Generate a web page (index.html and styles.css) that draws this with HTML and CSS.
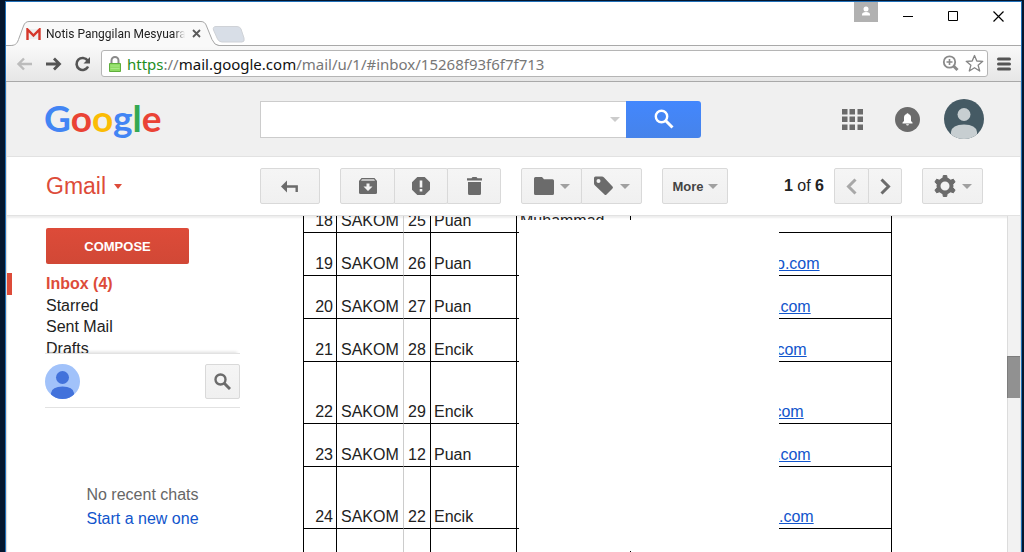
FILE: index.html
```html
<!DOCTYPE html>
<html lang="en">
<head>
<meta charset="utf-8">
<title>Notis Panggilan Mesyuarat - Gmail</title>
<link rel="stylesheet" href="styles.css">
</head>
<body>
<div class="window">
  <div class="titlebar">
    <div class="tab">
      <svg class="tab-shape" width="212" height="26" viewBox="0 0 212 26"><path d="M0 24.500C5 24.500 7 23 8.500 18.500L13.500 5Q15 .5 19 .5H191Q195 .5 196.500 5L202 18.500Q204.500 24.500 209 24.500V26H0Z" fill="#f9f9f9"/><path d="M0 24.500C5 24.500 7 23 8.500 18.500L13.500 5Q15 .5 19 .5H191Q195 .5 196.500 5L202 18.500Q204.500 24.500 209 24.500" fill="none" stroke="#a6a6a6"/></svg>
      <svg class="tab-icon" width="15" height="12" viewBox="0 0 15 12"><path d="M1 1h13v10H1z" fill="#eee"/><path d="M1.500 12V1.500L7.500 7.500 13.500 1.500V12" fill="none" stroke="#d5362a" stroke-width="2.400"/></svg>
      <span class="tab-title">Notis Panggilan Mesyuarat</span>
      <button class="plain tab-close" aria-label="Close tab"><svg width="9" height="9" viewBox="0 0 9 9"><path d="M1 1l7 7M8 1L1 8" stroke="#5a5a5a" stroke-width="1.800"/></svg></button>
    </div>
    <button class="plain new-tab" aria-label="New tab"><svg width="34" height="17" viewBox="0 0 34 17"><path d="M4 .5H25Q28 .5 29 3L32 12Q33 16 30 16H10Q7 16 5.500 13L1.500 4Q.5 .5 4 .5Z" fill="#d8dee7" stroke="#cfd2d7"/></svg></button>
    <div class="window-buttons">
      <span class="profile"><svg width="24" height="20" viewBox="0 0 24 20"><circle cx="12" cy="7" r="2.500" fill="#fff"/><path d="M8 13.500V12.500Q8 10 12 10T16 12.500V13.500Z" fill="#fff"/></svg></span>
      <button class="plain win" aria-label="Minimize"><svg width="11" height="11" viewBox="0 0 11 11"><path d="M0 5.500H10" stroke="#000"/></svg></button>
      <button class="plain win" aria-label="Maximize"><svg width="11" height="11" viewBox="0 0 11 11"><path d="M.5.5h9v9h-9z" fill="none" stroke="#000"/></svg></button>
      <button class="plain win" aria-label="Close"><svg width="11" height="11" viewBox="0 0 11 11"><path d="M.5.5l10 10M10.500.5l-10 10" stroke="#000" stroke-width="1.200"/></svg></button>
    </div>
  </div>

  <div class="browser-bar">
    <button class="plain" aria-label="Back"><svg width="17" height="14" viewBox="0 0 17 14"><path d="M16 7H3M8 1.500L2.500 7 8 12.500" fill="none" stroke="#bcbcbc" stroke-width="2.400"/></svg></button>
    <button class="plain" aria-label="Forward"><svg width="17" height="14" viewBox="0 0 17 14"><path d="M1 7H14M9 1.500L14.500 7 9 12.500" fill="none" stroke="#555" stroke-width="2.800"/></svg></button>
    <button class="plain" aria-label="Reload"><svg width="17" height="16" viewBox="0 0 17 16"><path d="M13.500 4.500A6 6 0 1 0 14 10.500" fill="none" stroke="#555" stroke-width="2.600"/><path d="M16 1V7.500H9.500Z" fill="#555"/></svg></button>
    <div class="omnibox">
      <svg width="12" height="16" viewBox="0 0 12 16"><path d="M2.500 8V4.500a3.500 3.500 0 0 1 7 0V8" fill="none" stroke="#8a8a8a" stroke-width="2"/><path d="M.5 7.500h11v8H.5z" fill="#8edb63" stroke="#5fae3d"/><path d="M1.500 10h9M1.500 12.500h9" stroke="#a9e886"/></svg>
      <div class="url" role="textbox" contenteditable="true" spellcheck="false" aria-label="Address"><span class="scheme">https</span>://<span class="host">mail.google.com</span>/mail/u/1/#inbox/15268f93f6f7f713</div>
      <button class="plain" aria-label="Zoom"><svg width="17" height="17" viewBox="0 0 17 17"><circle cx="7.500" cy="7" r="5.700" fill="none" stroke="#8a8a8a" stroke-width="1.800"/><path d="M4.500 7h6M7.500 4v6" stroke="#8a8a8a" stroke-width="1.600"/><path d="M11.500 11l4 4" stroke="#8a8a8a" stroke-width="3"/></svg></button>
      <button class="plain" aria-label="Bookmark"><svg width="19" height="19" viewBox="0 0 19 19"><path d="M9.500 1.500L11.800 7 17.800 7.300 13.100 11.200 14.700 17 9.500 13.700 4.300 17 5.900 11.200 1.200 7.300 7.200 7Z" fill="#fff" stroke="#858585" stroke-width="1.300" stroke-linejoin="round"/></svg></button>
    </div>
    <button class="plain" aria-label="Menu"><svg width="14" height="14" viewBox="0 0 14 14"><path d="M1.500 2H12.500M1.500 7H12.500M1.500 12H12.500" stroke="#555" stroke-width="3" stroke-linecap="round"/></svg></button>
  </div>

  <div class="page">
    <header class="google-bar">
      <a class="logo" href="#" aria-label="Google"><span class="b">G</span><span class="r">o</span><span class="y">o</span><span class="b">g</span><span class="g">l</span><span class="r">e</span></a>
      <form class="search">
        <input type="text" aria-label="Search mail">
        <button type="button" class="plain options" aria-label="Search options"><span class="caret light"></span></button>
        <button type="button" class="search-go" aria-label="Search"><svg width="20" height="20" viewBox="0 0 20 20"><circle cx="7.500" cy="7.500" r="5.700" fill="none" stroke="#fff" stroke-width="2.400"/><path d="M11.500 11.500L18.500 18.500" stroke="#fff" stroke-width="3"/></svg></button>
      </form>
      <div class="account">
        <button class="plain" aria-label="Apps"><svg width="21" height="21" viewBox="0 0 21 21" fill="#6b6b6b"><path d="M0 0h5.500v5.500H0zM7.500 0h5.500v5.500H7.500zM15.500 0H21v5.500h-5.500zM0 7.500h5.500V13H0zM7.500 7.500h5.500V13H7.500zM15.500 7.500H21V13h-5.500zM0 15.500h5.500V21H0zM7.500 15.500h5.500V21H7.500zM15.500 15.500H21V21h-5.500z"/></svg></button>
        <button class="plain" aria-label="Notifications"><svg width="25" height="25" viewBox="0 0 25 25"><circle cx="12.500" cy="12.500" r="12.500" fill="#6b6b6b"/><path d="M7.500 16.500V15.500L9 14V10.500Q9 7.500 11.700 7V6.300h1.600V7Q16 7.500 16 10.500V14L17.500 15.500V16.500ZM11 17.200h3Q13.700 18.500 12.500 18.500T11 17.200Z" fill="#fff"/></svg></button>
        <button class="plain" aria-label="Account"><svg width="40" height="40" viewBox="0 0 40 40"><clipPath id="face"><circle cx="20" cy="20" r="20"/></clipPath><g clip-path="url(#face)"><path d="M0 0h40v40H0z" fill="#455a64"/><circle cx="20" cy="15.500" r="6.500" fill="#c7ced1"/><path d="M7 40V33Q8 25.500 20 25.500T33 33V40Z" fill="#c7ced1"/></g></svg></button>
      </div>
    </header>

    <div class="mail-bar">
      <button class="plain gmail">Gmail <span class="caret red"></span></button>
      <button class="btn back" aria-label="Back to inbox"><svg width="18" height="13" viewBox="0 0 18 13"><path d="M0 6.500L6 .5V12.500Z" fill="#6b6b6b"/><path d="M5 6.500H15.700V12" fill="none" stroke="#6b6b6b" stroke-width="2.400"/></svg></button>
      <div class="group">
        <button class="btn archive" aria-label="Archive"><svg width="18" height="16" viewBox="0 0 18 16"><path d="M2.500 0h13L18 3V14.500Q18 16 16.500 16h-15Q0 16 0 14.500V3Z" fill="#6b6b6b"/><path d="M3 1.300h12l1 1.400H2Z" fill="#dcdcdc"/><path d="M7.500 5.500h3V8.500H13.500L9 13 4.500 8.500h3Z" fill="#f4f4f4"/></svg></button>
        <button class="btn" aria-label="Report spam"><svg width="18" height="18" viewBox="0 0 18 18"><path d="M5.300 0h7.400L18 5.300v7.400L12.700 18H5.300L0 12.700V5.300Z" fill="#6b6b6b"/><path d="M7.700 3.500h2.600V10.500H7.700zM7.700 12h2.600v2.500H7.700z" fill="#f4f4f4"/></svg></button>
        <button class="btn" aria-label="Delete"><svg width="15" height="18" viewBox="0 0 15 18"><path d="M0 1.300H4.500L5.500 0h4l1 1.300H15V3.500H0zM1 5h13V16.500Q14 18 12.500 18h-10Q1 18 1 16.500Z" fill="#6b6b6b"/></svg></button>
      </div>
      <div class="group">
        <button class="btn wide" aria-label="Move to"><svg width="20" height="18" viewBox="0 0 20 18"><path d="M0 1.500Q0 0 1.500 0H8L10 2.300H18.500Q20 2.300 20 3.800V16.500Q20 18 18.500 18h-17Q0 18 0 16.500Z" fill="#6b6b6b"/></svg><span class="caret"></span></button>
        <button class="btn wide" aria-label="Labels"><svg width="20" height="20" viewBox="0 0 20 20"><path d="M0 2Q0 .5 1.500.5H8Q9 .5 10 1.500L18.500 10.500Q19.500 11.500 18.500 12.500L12.500 18.500Q11.500 19.500 10.500 18.500L1 9.500Q0 8.500 0 7.500Z" fill="#6b6b6b"/><circle cx="4.500" cy="5" r="2" fill="#f4f4f4"/></svg><span class="caret"></span></button>
      </div>
      <button class="btn more">More<span class="caret"></span></button>
      <div class="count"><b>1</b> of <b>6</b></div>
      <div class="group pager">
        <button class="btn" aria-label="Newer"><svg width="11" height="17" viewBox="0 0 11 17"><path d="M9.500 1.500L2.500 8.500 9.500 15.500" fill="none" stroke="#a8a8a8" stroke-width="3"/></svg></button>
        <button class="btn" aria-label="Older"><svg width="11" height="17" viewBox="0 0 11 17"><path d="M1.500 1.500L8.500 8.500 1.500 15.500" fill="none" stroke="#6b6b6b" stroke-width="3"/></svg></button>
      </div>
      <button class="btn wide settings" aria-label="Settings"><svg width="22" height="22" viewBox="0 0 22 22"><circle cx="11" cy="11" r="6.500" fill="none" stroke="#6b6b6b" stroke-width="4"/><path d="M8.800 3.500L9.300.5H12.700L13.200 3.500ZM8.800 18.500L9.300 21.500H12.700L13.200 18.500ZM3.200 9.100L.9 7.100 2.600 4.200 5.500 5.300ZM16.500 5.300L19.400 4.200 21.100 7.100 18.800 9.100ZM3.200 12.900L.9 14.900 2.600 17.800 5.500 16.700ZM16.500 16.700L19.400 17.800 21.100 14.900 18.800 12.900Z" fill="#6b6b6b" stroke="#6b6b6b" stroke-linejoin="round"/></svg><span class="caret"></span></button>
    </div>

    <div class="body">
      <aside class="sidebar">
        <button class="compose">COMPOSE</button>
        <ul class="folders">
          <li class="current"><a href="#">Inbox (4)</a></li>
          <li><a href="#">Starred</a></li>
          <li><a href="#">Sent Mail</a></li>
          <li><a href="#">Drafts</a></li>
        </ul>
        <section class="chat">
          <div class="chat-head">
            <svg width="35" height="35" viewBox="0 0 35 35"><clipPath id="me"><circle cx="17.500" cy="17.500" r="17.500"/></clipPath><g clip-path="url(#me)"><path d="M0 0h35v35H0z" fill="#a1c2fa"/><circle cx="17.500" cy="13.500" r="6.500" fill="#4272db"/><path d="M6 35V29Q7 22.500 17.500 22.500T29 29V35Z" fill="#4272db"/></g></svg>
            <button class="btn find" aria-label="Search people"><svg width="17" height="17" viewBox="0 0 17 17"><circle cx="6.500" cy="6.500" r="5" fill="none" stroke="#6b6b6b" stroke-width="2.400"/><path d="M10 10L16 16" stroke="#6b6b6b" stroke-width="3"/></svg></button>
          </div>
          <p class="chat-empty">No recent chats<br><a href="#">Start a new one</a></p>
        </section>
      </aside>

      <main class="message">
        <table>
          <colgroup><col class="c-no"><col class="c-org"><col class="c-id"><col class="c-title"><col class="c-name"><col class="c-mail"></colgroup>
          <tbody>
            <tr><td>18</td><td>SAKOM</td><td>25</td><td>Puan</td><td>Muhammad</td><td></td></tr>
            <tr><td>19</td><td>SAKOM</td><td>26</td><td>Puan</td><td></td><td><a href="#"><i class="hid m"></i>o.com</a></td></tr>
            <tr><td>20</td><td>SAKOM</td><td>27</td><td>Puan</td><td></td><td><a href="#"><i class="hid m"></i>.com</a></td></tr>
            <tr><td>21</td><td>SAKOM</td><td>28</td><td>Encik</td><td></td><td><a href="#"><i class="hid s"></i>.com</a></td></tr>
            <tr class="tall"><td>22</td><td>SAKOM</td><td>29</td><td>Encik</td><td></td><td><a href="#"><i class="hid xs"></i>.com</a></td></tr>
            <tr><td>23</td><td>SAKOM</td><td>12</td><td>Puan</td><td></td><td><a href="#"><i class="hid m"></i>.com</a></td></tr>
            <tr class="tall"><td>24</td><td>SAKOM</td><td>22</td><td>Encik</td><td></td><td><a href="#"><i class="hid l"></i>.com</a></td></tr>
            <tr class="tall"><td></td><td></td><td></td><td></td><td></td><td></td></tr>
          </tbody>
        </table>
        <div class="redaction"></div>
      </main>
      <div class="scrollbar"><div class="thumb"></div></div>
    </div>
  </div>
</div>
</body>
</html>
```
FILE: styles.css
```css
* { box-sizing: border-box; }
body {
  margin: 0;
  height: 100vh;
  overflow: hidden;
  padding: 1px 2px 0 5px;
  background: #04162e;
  font-family: "Liberation Sans", Arial, sans-serif;
  font-size: 16px;
  color: #222;
  display: flex;
}
svg { display: block; flex: none; }
a { color: inherit; text-decoration: none; }
button { font-family: inherit; }
.plain { border: 0; padding: 0; background: none; display: flex; align-items: center; color: inherit; }

.window {
  flex: 1;
  min-width: 0;
  display: flex;
  flex-direction: column;
  border: 1px solid #2170b8;
  border-bottom: 0;
  background: #fff;
}

/* tab strip */
.titlebar {
  display: flex;
  height: 44px;
  padding-left: 4px;
  border-bottom: 1px solid #a9a9a9;
}
.tab {
  position: relative;
  display: flex;
  align-items: center;
  gap: 5px;
  width: 204px;
  height: 25px;
  margin-top: 19px;
  padding-left: 16px;
  font-family: Roboto, "Open Sans", sans-serif;
  font-size: 12px;
}
.tab-shape { position: absolute; left: 0; top: 0; }
.tab-icon, .tab-title, .tab-close { position: relative; }
.tab-title {
  width: 139px;
  overflow: hidden;
  white-space: nowrap;
  -webkit-mask-image: linear-gradient(90deg, #000 92%, transparent);
  mask-image: linear-gradient(90deg, #000 92%, transparent);
}
.tab-close { margin-left: 2px; }
.new-tab { height: 17px; margin-top: 24px; margin-left: -2px; }
.window-buttons { margin-left: auto; display: flex; align-items: flex-start; }
.profile { background: #b1b1b1; margin-right: 8px; }
.win { width: 45px; height: 28px; justify-content: center; }

/* address bar */
.browser-bar {
  display: flex;
  align-items: center;
  gap: 12px;
  height: 36px;
  padding: 0 10px;
  background: linear-gradient(#f9f9f9, #e6e6e6);
  border-bottom: 1px solid #a9a9a9;
}
.omnibox {
  flex: 1;
  display: flex;
  align-items: center;
  gap: 6px;
  height: 27px;
  margin: 0 -3px 0 -2px;
  padding: 0 3px 0 7px;
  background: #fff;
  border: 1px solid #b5b5b5;
  border-radius: 3px;
}
.url {
  flex: 1;
  font-family: "Noto Sans", "Open Sans", sans-serif;
  font-size: 15px;
  line-height: 24px;
  color: #777;
  outline: 0;
  white-space: nowrap;
}
.scheme { color: #1e8e1e; }
.host { color: #111; }

/* Google header */
.page {
  flex: 1;
  min-height: 0;
  display: flex;
  flex-direction: column;
  border: solid #dcdcdc;
  border-width: 0 1px;
}
.google-bar {
  display: flex;
  align-items: center;
  height: 75px;
  padding: 0 36px 0 37px;
  background: #f0f0f0;
  border-bottom: 1px solid #e2e2e2;
}
.logo {
  width: 216px;
  padding-bottom: 2px;
  font-family: Lato, sans-serif;
  font-weight: 700;
  font-size: 37px;
  line-height: 44px;
}
.b { color: #4285f4; }
.r { color: #ea4335; }
.y { color: #fbbc05; }
.g { color: #34a853; }
.search { position: relative; display: flex; width: 441px; height: 37px; }
.search input {
  flex: 1;
  min-width: 0;
  border: 1px solid #ccc;
  border-right: 0;
  padding: 0 32px 0 8px;
  font-size: 16px;
  background: #fff;
}
.options { position: absolute; right: 81px; top: 16px; }
.search-go {
  width: 75px;
  display: flex;
  align-items: center;
  justify-content: center;
  border: 0;
  border-radius: 0 3px 3px 0;
  background: linear-gradient(#4387fd, #4683ea);
}
.account { margin-left: auto; display: flex; align-items: center; gap: 24px; }
.account button:nth-child(2) { margin: 0 0 0 8px; }

.caret {
  display: inline-block;
  border: 5px solid transparent;
  border-top-color: #a0a0a0;
  border-bottom: 0;
}
.caret.light { border-top-color: #ccc; }
.caret.red { border-width: 5px 4px 0; border-top-color: #dd4b39; }

/* mail toolbar */
.mail-bar {
  display: flex;
  align-items: center;
  gap: 20px;
  height: 59px;
  padding: 0 37px 0 39px;
  border-bottom: 1px solid #e2e2e2;
}
.gmail { width: 194px; gap: 8px; font-size: 23px; color: #dd4b39; }
.btn {
  display: flex;
  align-items: center;
  justify-content: center;
  gap: 6px;
  height: 36px;
  padding: 0;
  border: 1px solid #d9d9d9;
  border-radius: 2px;
  background: linear-gradient(#f5f5f5, #f0f0f0);
  color: #444;
}
.back { width: 60px; }
.group { display: flex; }
.group .btn { width: 54px; }
.group .archive { width: 55px; }
.group .btn + .btn { margin-left: -1px; border-radius: 0 2px 2px 0; }
.group .btn.wide, .wide { width: 61px; }
.more { width: 66px; gap: 4px; font-size: 13px; font-weight: 700; }
.count { margin-left: auto; font-size: 16px; }
.pager { margin-left: -10px; }
.pager.group .btn { width: 35px; }
.pager.group .btn + .btn { width: 34px; }

/* content area */
.body { flex: 1; min-height: 0; display: flex; overflow: hidden; box-shadow: inset 0 2px 2px #eee; }
.sidebar { width: 233px; flex: none; padding-top: 12px; }
.compose {
  display: block;
  width: 143px;
  height: 36px;
  margin-left: 39px;
  border: 0;
  border-radius: 2px;
  background: linear-gradient(#dd4b39, #d14836);
  color: #fff;
  font-size: 13px;
  font-weight: 700;
}
.folders { height: 80px; margin: 9px 0 0; padding: 0; overflow: hidden; list-style: none; line-height: 21px; }
.folders li { padding-left: 39px; }
.folders li:last-child { line-height: 23px; }
.folders .current { padding-left: 34px; border-left: 5px solid #dd4b39; line-height: 22px; color: #dd4b39; font-weight: 700; }
.chat { margin-left: 38px; border-top: 1px solid #e2e2e2; box-shadow: 0 -4px 3px -3px #ddd; }
.chat-head {
  display: flex;
  justify-content: space-between;
  padding: 10px 0 8px;
  border-bottom: 1px solid #e2e2e2;
}
.find { width: 35px; height: 35px; }
.chat-empty { margin: 75px 0 0; text-align: center; line-height: 24px; color: #666; }
.chat-empty a { color: #15c; }

.message { position: relative; flex: 1; min-width: 0; overflow: hidden; padding-left: 63px; }
table { width: 589px; margin-top: -26px; table-layout: fixed; border-spacing: 0; }
.c-no { width: 34px; }
.c-org { width: 67px; }
.c-id { width: 27px; }
.c-title { width: 86px; }
.c-name { width: 114px; }
.c-mail { width: 261px; }
td {
  height: 43px;
  padding: 0 3px 2px;
  border: solid #000;
  border-width: 0 1px 1px 0;
  vertical-align: bottom;
  line-height: 18px;
  white-space: nowrap;
}
.tall td { height: 62px; }
td:first-child { border-left-width: 1px; text-align: right; }
td:nth-child(2) { padding-left: 4px; border-right-color: #ccc; }
td:nth-child(3) { padding-left: 4px; }
td a { color: #15c; text-decoration: underline; }
.hid { display: inline-block; width: 142px; }
.hid.xs { width: 135px; }
.hid.s { width: 138px; }
.hid.l { width: 145px; }
.redaction { position: absolute; left: 279px; top: 4px; width: 260px; height: 331px; background: #fff; }

.scrollbar { width: 13px; flex: none; padding-top: 140px; background: #f2f2f2; box-shadow: inset 1px 0 #dcdcdc; }
.thumb { height: 42px; background: #919191; border: 1px solid #7c7c7c; border-width: 1px 0 0 1px; }
```
